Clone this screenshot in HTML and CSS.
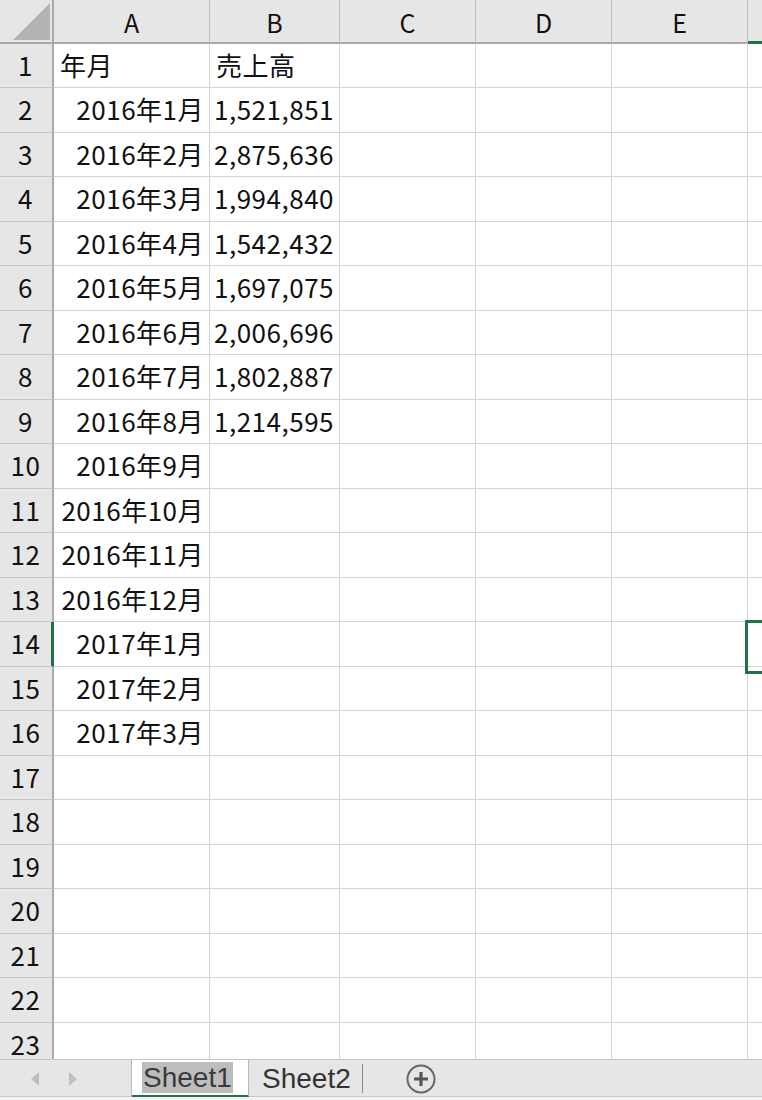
FILE: index.html
```html
<!DOCTYPE html>
<html lang="ja">
<head>
<meta charset="utf-8">
<link rel="stylesheet" href="styles.css">
</head>
<body>
<div class="app">
  <div class="sheet">
    <div class="grid">
      <div class="corner"><span class="tri"></span></div>
      <div class="ch">A</div><div class="ch">B</div><div class="ch">C</div><div class="ch">D</div><div class="ch">E</div><div class="ch chsel"></div>

      <div class="rh">1</div><div class="c l">年月</div><div class="c l">売上高</div><div class="c"></div><div class="c"></div><div class="c"></div><div class="c"></div>
      <div class="rh">2</div><div class="c r">2016年1月</div><div class="c r">1,521,851</div><div class="c"></div><div class="c"></div><div class="c"></div><div class="c"></div>
      <div class="rh">3</div><div class="c r">2016年2月</div><div class="c r">2,875,636</div><div class="c"></div><div class="c"></div><div class="c"></div><div class="c"></div>
      <div class="rh">4</div><div class="c r">2016年3月</div><div class="c r">1,994,840</div><div class="c"></div><div class="c"></div><div class="c"></div><div class="c"></div>
      <div class="rh">5</div><div class="c r">2016年4月</div><div class="c r">1,542,432</div><div class="c"></div><div class="c"></div><div class="c"></div><div class="c"></div>
      <div class="rh">6</div><div class="c r">2016年5月</div><div class="c r">1,697,075</div><div class="c"></div><div class="c"></div><div class="c"></div><div class="c"></div>
      <div class="rh">7</div><div class="c r">2016年6月</div><div class="c r">2,006,696</div><div class="c"></div><div class="c"></div><div class="c"></div><div class="c"></div>
      <div class="rh">8</div><div class="c r">2016年7月</div><div class="c r">1,802,887</div><div class="c"></div><div class="c"></div><div class="c"></div><div class="c"></div>
      <div class="rh">9</div><div class="c r">2016年8月</div><div class="c r">1,214,595</div><div class="c"></div><div class="c"></div><div class="c"></div><div class="c"></div>
      <div class="rh">10</div><div class="c r">2016年9月</div><div class="c"></div><div class="c"></div><div class="c"></div><div class="c"></div><div class="c"></div>
      <div class="rh">11</div><div class="c r">2016年10月</div><div class="c"></div><div class="c"></div><div class="c"></div><div class="c"></div><div class="c"></div>
      <div class="rh">12</div><div class="c r">2016年11月</div><div class="c"></div><div class="c"></div><div class="c"></div><div class="c"></div><div class="c"></div>
      <div class="rh">13</div><div class="c r">2016年12月</div><div class="c"></div><div class="c"></div><div class="c"></div><div class="c"></div><div class="c"></div>
      <div class="rh rhsel">14</div><div class="c r">2017年1月</div><div class="c"></div><div class="c"></div><div class="c"></div><div class="c"></div><div class="c active"></div>
      <div class="rh">15</div><div class="c r">2017年2月</div><div class="c"></div><div class="c"></div><div class="c"></div><div class="c"></div><div class="c"></div>
      <div class="rh">16</div><div class="c r">2017年3月</div><div class="c"></div><div class="c"></div><div class="c"></div><div class="c"></div><div class="c"></div>
      <div class="rh">17</div><div class="c"></div><div class="c"></div><div class="c"></div><div class="c"></div><div class="c"></div><div class="c"></div>
      <div class="rh">18</div><div class="c"></div><div class="c"></div><div class="c"></div><div class="c"></div><div class="c"></div><div class="c"></div>
      <div class="rh">19</div><div class="c"></div><div class="c"></div><div class="c"></div><div class="c"></div><div class="c"></div><div class="c"></div>
      <div class="rh">20</div><div class="c"></div><div class="c"></div><div class="c"></div><div class="c"></div><div class="c"></div><div class="c"></div>
      <div class="rh">21</div><div class="c"></div><div class="c"></div><div class="c"></div><div class="c"></div><div class="c"></div><div class="c"></div>
      <div class="rh">22</div><div class="c"></div><div class="c"></div><div class="c"></div><div class="c"></div><div class="c"></div><div class="c"></div>
      <div class="rh">23</div><div class="c"></div><div class="c"></div><div class="c"></div><div class="c"></div><div class="c"></div><div class="c"></div>
    </div>
  </div>
  <div class="tabbar">
    <div class="nav">
      <span class="arrow left"></span>
      <span class="arrow right"></span>
    </div>
    <div class="tab active-tab"><span class="tabtext hl">Sheet1</span></div>
    <div class="tab"><span class="tabtext">Sheet2</span></div>
    <div class="sep"></div>
    <div class="add">
      <svg width="32" height="32" viewBox="0 0 32 32">
        <circle cx="16" cy="16" r="13.5" fill="none" stroke="#666" stroke-width="2"/>
        <path d="M16 9v14M9 16h14" stroke="#555" stroke-width="3.2" fill="none"/>
      </svg>
    </div>
  </div>
</div>
</body>
</html>
```

FILE: styles.css
```css
* { box-sizing: border-box; }
html, body { margin: 0; padding: 0; background: #fff; }
body {
  font-family: "Noto Sans CJK JP", "Noto Sans", sans-serif;
  color: #111;
}
.app {
  width: 762px;
  height: 1100px;
  display: flex;
  flex-direction: column;
  overflow: hidden;
}
.sheet {
  flex: 1;
  overflow: hidden;
  min-height: 0;
}
.grid {
  display: grid;
  grid-template-columns: 54px 156px 130px 136px 136px 136px 60px;
  grid-template-rows: 44px repeat(11, 44px 45px) 44px;
}
.corner {
  background: #e6e6e6;
  border-right: 2px solid #a9a9a9;
  border-bottom: 2px solid #a9a9a9;
  position: relative;
}
.tri {
  position: absolute;
  left: 13px;
  top: 3px;
  width: 37px;
  height: 37px;
  background: #b4b4b4;
  clip-path: polygon(100% 0, 100% 100%, 0 100%);
}
.ch {
  background: #e6e6e6;
  border-right: 1px solid #c0c0c0;
  border-bottom: 2px solid #a9a9a9;
  display: flex;
  align-items: center;
  justify-content: center;
  font-size: 25px;
  padding-top: 1px;
}
.chsel {
  border-bottom: 3px solid #217346;
}
.rh {
  background: #e6e6e6;
  border-right: 2px solid #a9a9a9;
  border-bottom: 1px solid #c6c6c6;
  display: flex;
  align-items: center;
  justify-content: center;
  font-size: 26px;
  letter-spacing: 0.5px;
  padding-bottom: 3px;
  padding-right: 1px;
}
.rhsel {
  border-right: 3px solid #217346;
  padding-right: 0;
}
.c {
  border-right: 1px solid #d4d4d4;
  border-bottom: 1px solid #d4d4d4;
  display: flex;
  align-items: center;
  font-size: 26px;
  letter-spacing: 0.5px;
  padding: 0 5px 3px 6px;
  white-space: nowrap;
}
.c.l { justify-content: flex-start; }
.c.r { justify-content: flex-end; }
.active { position: relative; }
.active::after {
  content: "";
  position: absolute;
  left: -3px;
  top: -2px;
  width: 40px;
  height: 48px;
  border: 3px solid #217346;
}
.tabbar {
  height: 41px;
  flex: none;
  background: #e6e6e6;
  border-top: 1px solid #c6c6c6;
  border-bottom: 3px solid #f3f3f3;
  display: flex;
  align-items: stretch;
  position: relative;
}
.tabbar::after {
  content: "";
  position: absolute;
  left: 0; right: 0; bottom: 0;
  height: 1px;
  background: #c8c8c8;
}
.nav {
  width: 132px;
  display: flex;
  align-items: center;
  padding-left: 31px;
  gap: 30px;
  border-right: 1px solid #b8b8b8;
}
.arrow {
  width: 0; height: 0;
  border-top: 7px solid transparent;
  border-bottom: 7px solid transparent;
}
.arrow.left { border-right: 8px solid #c0c0c0; }
.arrow.right { border-left: 8px solid #c0c0c0; }
.tab {
  display: flex;
  align-items: center;
  padding: 0 10px 0 12px;
  font-family: "Liberation Sans", Arial, sans-serif;
  font-size: 28px;
  color: #333;
}
.active-tab {
  width: 117px;
  background: #fff;
  border-right: 1px solid #b8b8b8;
  border-bottom: 2px solid #217346;
  padding: 0 0 0 10px;
  z-index: 1;
}
.tabtext { line-height: 31px; padding: 0 1px; }
.hl { background: #bdbdbd; color: #3a3a3a; }
.sep {
  width: 1px;
  background: #8a8a8a;
  margin: 4px 0 4px 0;
}
.add {
  display: flex;
  align-items: center;
  padding-left: 42px;
}
```
